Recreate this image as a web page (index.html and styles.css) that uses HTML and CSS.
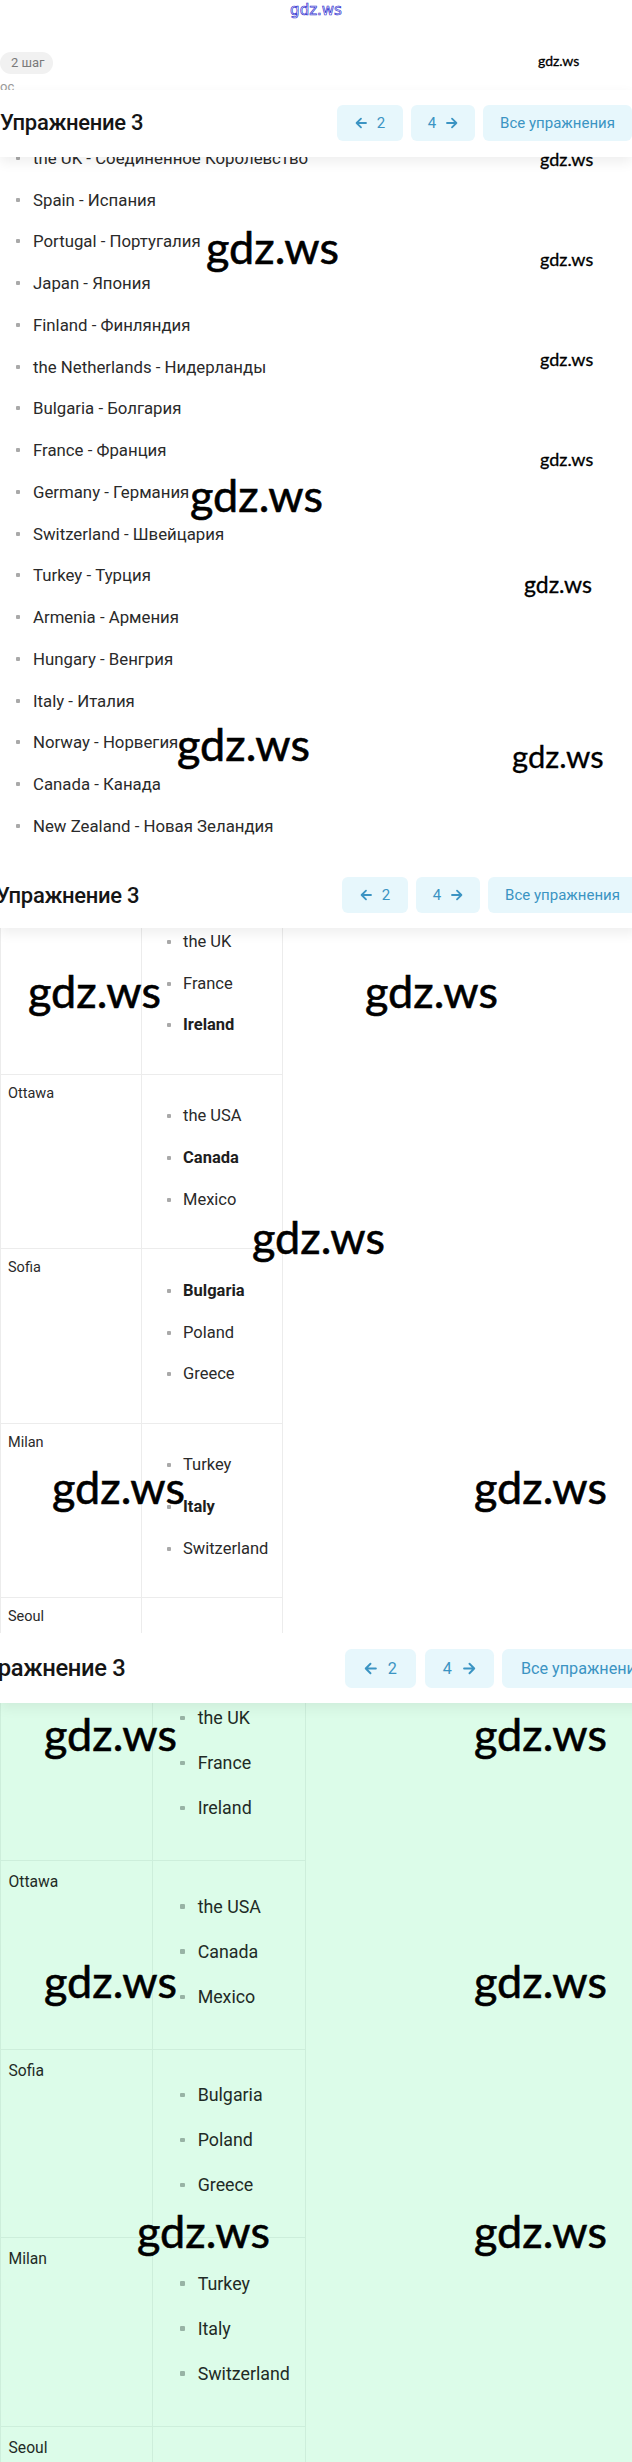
FILE: index.html
```html
<!DOCTYPE html>
<html lang="ru">
<head>
<meta charset="utf-8">
<title>Упражнение 3</title>
<link rel="stylesheet" href="styles.css">
</head>
<body>

<section class="shot shot-1">
  <div class="logo">gdz.ws</div>
  <div class="step"><span class="badge">2 шаг</span></div>
  <div class="sub">ос</div>
  <header class="bar bar-1">
    <h1 class="bar-title">Упражнение 3</h1>
    <nav class="bar-nav">
      <a class="btn btn-prev"><svg class="arr" viewBox="0 0 12 12"><path d="M11 6H1.6M6 1.6L1.6 6L6 10.4"/></svg><span>2</span></a>
      <a class="btn btn-next"><span>4</span><svg class="arr" viewBox="0 0 12 12"><path d="M1 6H10.4M6 1.6L10.4 6L6 10.4"/></svg></a>
      <a class="btn btn-all">Все упражнения</a>
    </nav>
  </header>
  <ul class="pairs">
    <li>the UK - Соединенное Королевство</li>
    <li>Spain - Испания</li>
    <li>Portugal - Португалия</li>
    <li>Japan - Япония</li>
    <li>Finland - Финляндия</li>
    <li>the Netherlands - Нидерланды</li>
    <li>Bulgaria - Болгария</li>
    <li>France - Франция</li>
    <li>Germany - Германия</li>
    <li>Switzerland - Швейцария</li>
    <li>Turkey - Турция</li>
    <li>Armenia - Армения</li>
    <li>Hungary - Венгрия</li>
    <li>Italy - Италия</li>
    <li>Norway - Норвегия</li>
    <li>Canada - Канада</li>
    <li>New Zealand - Новая Зеландия</li>
  </ul>
  <span class="wm wm-1a">gdz.ws</span>
  <span class="wm wm-1b">gdz.ws</span>
  <span class="wm wm-lg wm-1c">gdz.ws</span>
  <span class="wm wm-1d">gdz.ws</span>
  <span class="wm wm-1e">gdz.ws</span>
  <span class="wm wm-1f">gdz.ws</span>
  <span class="wm wm-lg wm-1g">gdz.ws</span>
  <span class="wm wm-1h">gdz.ws</span>
  <span class="wm wm-lg wm-1i">gdz.ws</span>
  <span class="wm wm-1j">gdz.ws</span>
</section>

<section class="shot shot-2">
  <header class="bar bar-2">
    <h1 class="bar-title">Упражнение 3</h1>
    <nav class="bar-nav">
      <a class="btn btn-prev"><svg class="arr" viewBox="0 0 12 12"><path d="M11 6H1.6M6 1.6L1.6 6L6 10.4"/></svg><span>2</span></a>
      <a class="btn btn-next"><span>4</span><svg class="arr" viewBox="0 0 12 12"><path d="M1 6H10.4M6 1.6L10.4 6L6 10.4"/></svg></a>
      <a class="btn btn-all">Все упражнения</a>
    </nav>
  </header>
  <div class="grid">
    <div class="row">
      <div class="cell cell-city"></div>
      <div class="cell cell-list"><ul><li>the UK</li><li>France</li><li class="ok">Ireland</li></ul></div>
    </div>
    <div class="row">
      <div class="cell cell-city">Ottawa</div>
      <div class="cell cell-list"><ul><li>the USA</li><li class="ok">Canada</li><li>Mexico</li></ul></div>
    </div>
    <div class="row">
      <div class="cell cell-city">Sofia</div>
      <div class="cell cell-list"><ul><li class="ok">Bulgaria</li><li>Poland</li><li>Greece</li></ul></div>
    </div>
    <div class="row">
      <div class="cell cell-city">Milan</div>
      <div class="cell cell-list"><ul><li>Turkey</li><li class="ok">Italy</li><li>Switzerland</li></ul></div>
    </div>
    <div class="row">
      <div class="cell cell-city">Seoul</div>
      <div class="cell cell-list"></div>
    </div>
  </div>
  <span class="wm wm-lg wm-2k">gdz.ws</span>
  <span class="wm wm-lg wm-2l">gdz.ws</span>
  <span class="wm wm-lg wm-2m">gdz.ws</span>
  <span class="wm wm-lg wm-2n">gdz.ws</span>
  <span class="wm wm-lg wm-2o">gdz.ws</span>
</section>

<section class="shot shot-3">
  <div class="zoomed">
    <header class="bar bar-3">
      <h1 class="bar-title">Упражнение 3</h1>
      <nav class="bar-nav">
        <a class="btn btn-prev"><svg class="arr" viewBox="0 0 12 12"><path d="M11 6H1.6M6 1.6L1.6 6L6 10.4"/></svg><span>2</span></a>
        <a class="btn btn-next"><span>4</span><svg class="arr" viewBox="0 0 12 12"><path d="M1 6H10.4M6 1.6L10.4 6L6 10.4"/></svg></a>
        <a class="btn btn-all">Все упражнения</a>
      </nav>
    </header>
    <div class="grid grid-green">
      <div class="row">
        <div class="cell cell-city"></div>
        <div class="cell cell-list"><ul><li>the UK</li><li>France</li><li>Ireland</li></ul></div>
      </div>
      <div class="row">
        <div class="cell cell-city">Ottawa</div>
        <div class="cell cell-list"><ul><li>the USA</li><li>Canada</li><li>Mexico</li></ul></div>
      </div>
      <div class="row">
        <div class="cell cell-city">Sofia</div>
        <div class="cell cell-list"><ul><li>Bulgaria</li><li>Poland</li><li>Greece</li></ul></div>
      </div>
      <div class="row">
        <div class="cell cell-city">Milan</div>
        <div class="cell cell-list"><ul><li>Turkey</li><li>Italy</li><li>Switzerland</li></ul></div>
      </div>
      <div class="row">
        <div class="cell cell-city">Seoul</div>
        <div class="cell cell-list"></div>
      </div>
    </div>
  </div>
  <span class="wm wm-lg wm-3p">gdz.ws</span>
  <span class="wm wm-lg wm-3q">gdz.ws</span>
  <span class="wm wm-lg wm-3r">gdz.ws</span>
  <span class="wm wm-lg wm-3s">gdz.ws</span>
  <span class="wm wm-lg wm-3t">gdz.ws</span>
  <span class="wm wm-lg wm-3u">gdz.ws</span>
</section>

</body>
</html>
```

FILE: styles.css
```css
* { box-sizing: border-box; margin: 0; padding: 0; }

html, body { width: 632px; background: #ffffff; }

body {
  font-family: Roboto, "Noto Sans", "Liberation Sans", sans-serif;
  color: #2a2a2a;
  overflow: hidden;
}

.shot { position: relative; overflow: hidden; width: 632px; }
.shot-1 { height: 862px; }
.shot-2 { height: 771px; }
.shot-3 { height: 829px; background: #dcfce9; }

.zoomed { zoom: 1.08; }

/* top logo */
.logo {
  height: 20px;
  line-height: 20px;
  text-align: center;
  font-family: "DejaVu Sans", sans-serif;
  font-size: 15px;
  color: transparent;
  -webkit-text-stroke: 0.7px #3030d0;
}

.step { margin-top: 32px; height: 22px; }
.badge {
  display: inline-block;
  height: 22px;
  line-height: 22px;
  padding: 0 8px 0 11px;
  border-radius: 11px;
  background: #f1f1f1;
  color: #7a7a7a;
  font-size: 13px;
}

.sub {
  margin-top: 6px;
  height: 10px;
  font-size: 13px;
  line-height: 14px;
  color: #9a9a9a;
}

/* sticky exercise bar */
.bar {
  position: relative;
  z-index: 2;
  display: flex;
  align-items: center;
  height: 65px;
  background: #ffffff;
  box-shadow: 0 5px 12px rgba(0, 0, 0, 0.07);
}
.bar-1 { height: 67px; padding-bottom: 2px; }
.bar-2 { height: 66px; margin-right: -5px; }
.bar-2 .bar-title { margin-left: -4px; }
.bar-3 { margin-right: -29px; }
.bar-3 .bar-title { margin-left: -27px; }

.bar-title {
  flex: none;
  font-size: 22px;
  font-weight: 500;
  letter-spacing: -0.3px;
  color: #151515;
  white-space: nowrap;
}

.bar-nav { margin-left: auto; display: flex; gap: 8px; }

.btn {
  display: flex;
  align-items: center;
  justify-content: center;
  gap: 10px;
  height: 36px;
  border-radius: 6px;
  background: #e7f7fc;
  color: #3b94c3;
  font-size: 15px;
  white-space: nowrap;
}
.btn-prev { width: 66px; }
.btn-next { width: 64px; }
.btn-all { width: 149px; }

.arr {
  width: 12px;
  height: 12px;
  fill: none;
  stroke: currentColor;
  stroke-width: 1.8;
  stroke-linecap: round;
  stroke-linejoin: round;
}

/* word pairs list */
.pairs {
  list-style: none;
  margin-top: -20px;
  padding-left: 16px;
  font-size: 16.8px;
  color: #2a2a2a;
}
.pairs li {
  display: flex;
  align-items: center;
  height: 41.75px;
  line-height: 20px;
  white-space: nowrap;
}
.pairs li::before,
.cell-list li::before {
  content: "";
  flex: none;
  width: 4px;
  height: 4px;
  border-radius: 1px;
  background: #a9a9a9;
  margin-right: 13px;
}

/* capitals table */
.grid { margin-top: -28px; width: 283px; }
.row {
  display: grid;
  grid-template-columns: 142px 141px;
  height: 174.5px;
  border-bottom: 1px solid #ececec;
}
.cell { border-right: 1px solid #ececec; }
.cell-city {
  border-left: 1px solid #ececec;
  padding: 10px 0 0 7px;
  font-size: 14.5px;
  line-height: 18px;
  color: #2a2a2a;
}
.cell-list { padding-top: 10px; }
.cell-list ul { list-style: none; margin-top: 11px; padding-left: 25px; }
.cell-list li {
  display: flex;
  align-items: center;
  height: 41.7px;
  font-size: 16.5px;
  line-height: 20px;
  color: #2a2a2a;
  white-space: nowrap;
}
.cell-list li::before { margin-right: 12px; }
.cell-list li.ok { font-weight: 700; color: #1e1e1e; }

.grid-green .row { border-bottom-color: #cdeedb; }
.grid-green .cell { border-right-color: #cdeedb; }
.grid-green .cell-city { border-left-color: #cdeedb; color: #1f2b26; }
.grid-green .cell-list li { color: #1f2b26; }
.grid-green .cell-list li::before { background: #98b3a5; }

/* watermarks */
.wm {
  position: absolute;
  z-index: 5;
  font-family: Lato, "Open Sans", sans-serif;
  color: #000000;
  line-height: 1;
  white-space: nowrap;
  -webkit-text-stroke: 0.3px #000000;
}
.wm-lg { font-size: 45px; -webkit-text-stroke: 0.6px #000000; }

.wm-1a { left: 538px; top: 54px; font-size: 14px; }
.wm-1b { left: 540px; top: 150px; font-size: 18px; }
.wm-1c { left: 206px; top: 225px; }
.wm-1d { left: 540px; top: 250px; font-size: 18px; }
.wm-1e { left: 540px; top: 350px; font-size: 18px; }
.wm-1f { left: 540px; top: 450px; font-size: 18px; }
.wm-1g { left: 190px; top: 473px; }
.wm-1h { left: 524px; top: 573px; font-size: 23px; }
.wm-1i { left: 177px; top: 722px; }
.wm-1j { left: 512px; top: 741px; font-size: 31px; }

.wm-2k { left: 28px; top: 107px; }
.wm-2l { left: 365px; top: 107px; }
.wm-2m { left: 252px; top: 353px; }
.wm-2n { left: 52px; top: 603px; }
.wm-2o { left: 474px; top: 603px; }

.wm-3p { left: 44px; top: 79px; }
.wm-3q { left: 474px; top: 79px; }
.wm-3r { left: 44px; top: 326px; }
.wm-3s { left: 474px; top: 326px; }
.wm-3t { left: 137px; top: 576px; }
.wm-3u { left: 474px; top: 576px; }
```
